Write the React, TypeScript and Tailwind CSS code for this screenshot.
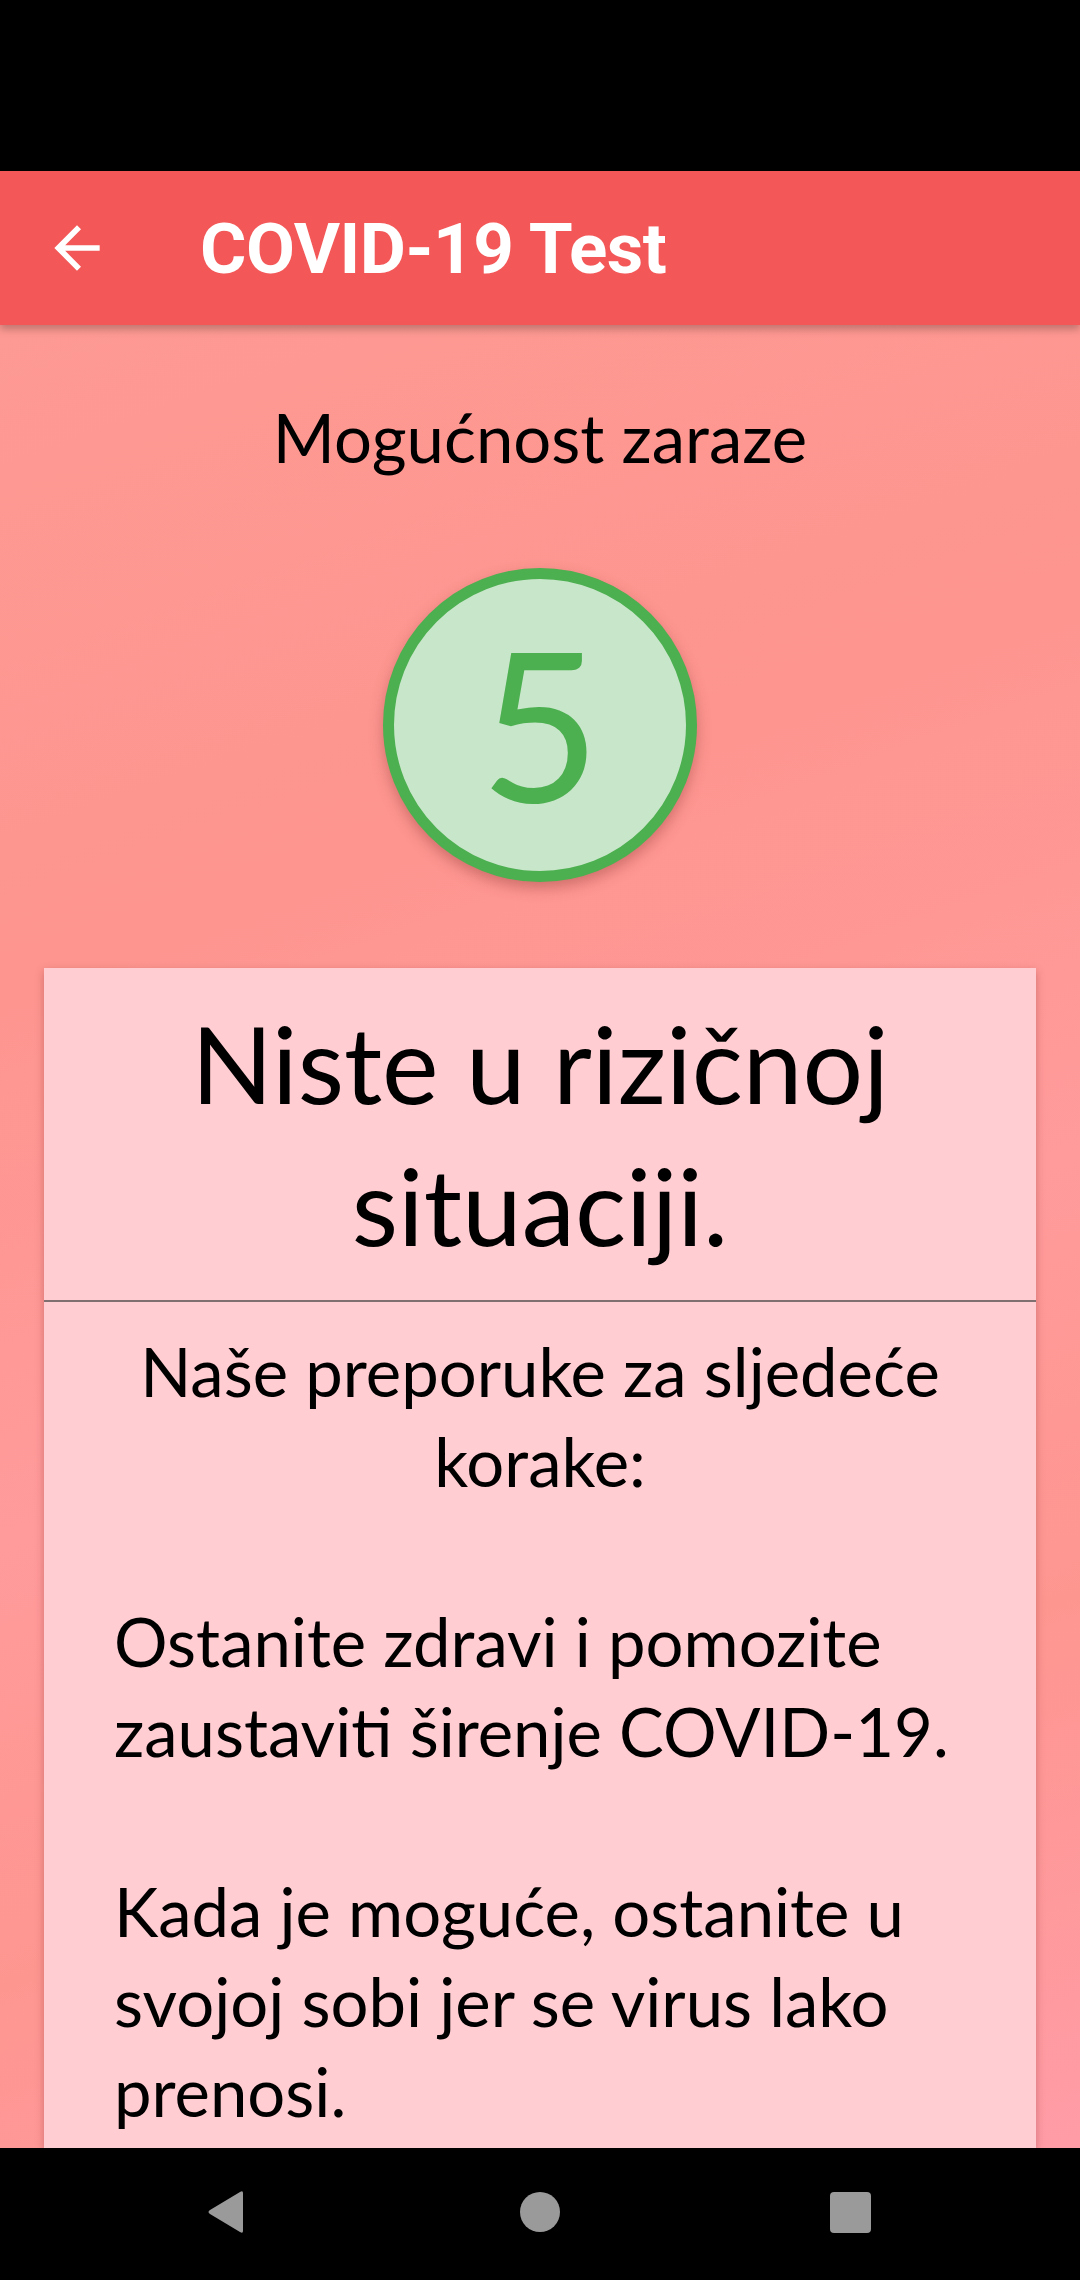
import React from "react";

export default function App() {
  return (
    <div className="w-[1080px] h-[2280px] flex flex-col overflow-hidden bg-black" style={{ fontFamily: "Lato, 'Noto Sans', sans-serif" }}>
      <div className="h-[171px] bg-black shrink-0" />
      <div className="relative z-10 h-[154px] shrink-0 bg-[#f35757] flex items-center shadow-[0_4px_8px_rgba(0,0,0,0.25)]">
        <div className="w-[200px] h-full flex items-center pl-[43px]">
          <svg width="68" height="68" viewBox="0 0 24 24" fill="white">
            <path d="M20 11H7.83l5.59-5.59L12 4l-8 8 8 8 1.41-1.41L7.83 13H20v-2z" />
          </svg>
        </div>
        <div className="text-white text-[71px] font-bold leading-none tracking-[-0.5px]" style={{ fontFamily: "Roboto, 'Liberation Sans', sans-serif" }}>
          COVID-19 Test
        </div>
      </div>
      <div className="flex-1 min-h-0 overflow-hidden flex flex-col items-center bg-[linear-gradient(160deg,#fd9a93_0%,#fe958f_30%,#ff9b9b_55%,#fe9690_75%,#ff9ca6_100%)]">
        <div className="pt-[72px] text-[67px] leading-[80px] text-black">Mogućnost zaraze</div>
        <div className="mt-[91px] w-[314px] h-[314px] shrink-0 rounded-full border-[11px] border-[#4caf50] bg-[#c8e6c9] flex items-center justify-center shadow-[0_6px_14px_rgba(120,40,40,0.35)]">
          <span className="text-[#4caf50] text-[208px] leading-none -mt-[6px]">5</span>
        </div>
        <div className="mt-[86px] w-[992px] flex-1 bg-[#ffcdd2] shadow-[0_3px_8px_rgba(120,40,40,0.35)] flex flex-col">
          <div className="pt-[24px] pb-[24px] px-[40px] text-center text-[107px] leading-[142px] text-black">
            Niste u rizičnoj situaciji.
          </div>
          <div className="h-[2px] bg-[#7f6f70]" />
          <div className="pt-[24px] px-[70px] text-[67px] leading-[90px] text-black">
            <div className="text-center px-[6px]">Naše preporuke za sljedeće korake:</div>
            <div className="mt-[90px]">Ostanite zdravi i pomozite zaustaviti širenje COVID-19.</div>
            <div className="mt-[90px]">Kada je moguće, ostanite u svojoj sobi jer se virus lako prenosi.</div>
          </div>
        </div>
      </div>
      <div className="h-[132px] shrink-0 bg-black flex items-center">
        <div className="w-full flex items-center -mt-[4px]">
          <div className="absolute left-[207px]">
            <svg width="38" height="44" viewBox="0 0 38 44">
              <path d="M36 3 L36 41 Q36 44 33 42 L3 24 Q0 22 3 20 L33 2 Q36 0 36 3 Z" fill="#9a9a9a" />
            </svg>
          </div>
          <div className="absolute left-[520px] w-[40px] h-[40px] rounded-full bg-[#9a9a9a]" />
          <div className="absolute left-[830px] w-[41px] h-[41px] rounded-[4px] bg-[#9a9a9a]" />
        </div>
      </div>
    </div>
  );
}
